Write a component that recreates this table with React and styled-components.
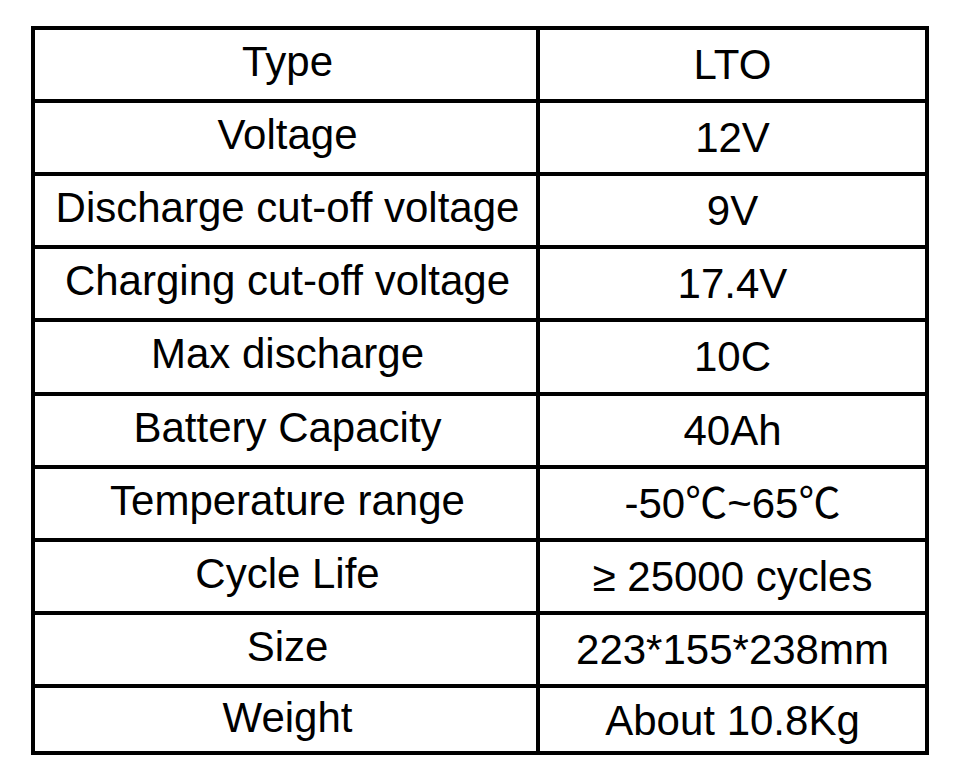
import React from 'react'
import styled, { createGlobalStyle } from 'styled-components'

const Global = createGlobalStyle`
  html, body {
    margin: 0;
    padding: 0;
    background: #fff;
  }
`

const Page = styled.div`
  width: 960px;
  height: 780px;
  padding: 26px 0 0 31px;
  box-sizing: border-box;
  background: #fff;
`

const Sheet = styled.div`
  display: grid;
  grid-template-columns: 501px 385px;
  grid-template-rows: repeat(4, 69px) 70px repeat(4, 69px) 63px;
  gap: 4px;
  padding: 4px;
  width: 898px;
  background: #000;
  box-sizing: border-box;
`

const Cell = styled.div`
  background: #fff;
  display: flex;
  align-items: flex-start;
  justify-content: center;
  font-family: "Liberation Sans", Arial, "Noto Sans CJK SC", sans-serif;
  font-size: 42px;
  line-height: 42px;
  color: #000;
  white-space: nowrap;
  padding-top: ${p => (p.$side === 'value' ? 14 : 11) - (p.$last ? 2 : 0)}px;
  padding-left: ${p => (p.$side === 'value' ? 0 : 4)}px;
  box-sizing: border-box;
`

const specs = [
  ['Type', 'LTO'],
  ['Voltage', '12V'],
  ['Discharge cut-off voltage', '9V'],
  ['Charging cut-off voltage', '17.4V'],
  ['Max discharge', '10C'],
  ['Battery Capacity', '40Ah'],
  ['Temperature range', '-50℃~65℃'],
  ['Cycle Life', '≥ 25000 cycles'],
  ['Size', '223*155*238mm'],
  ['Weight', 'About 10.8Kg'],
]

export default function App() {
  return (
    <>
      <Global />
      <Page>
        <Sheet>
          {specs.map(([label, value], i) => {
            const last = i === specs.length - 1
            return (
              <React.Fragment key={label}>
                <Cell $side="label" $last={last}>{label}</Cell>
                <Cell $side="value" $last={last}>{value}</Cell>
              </React.Fragment>
            )
          })}
        </Sheet>
      </Page>
    </>
  )
}
